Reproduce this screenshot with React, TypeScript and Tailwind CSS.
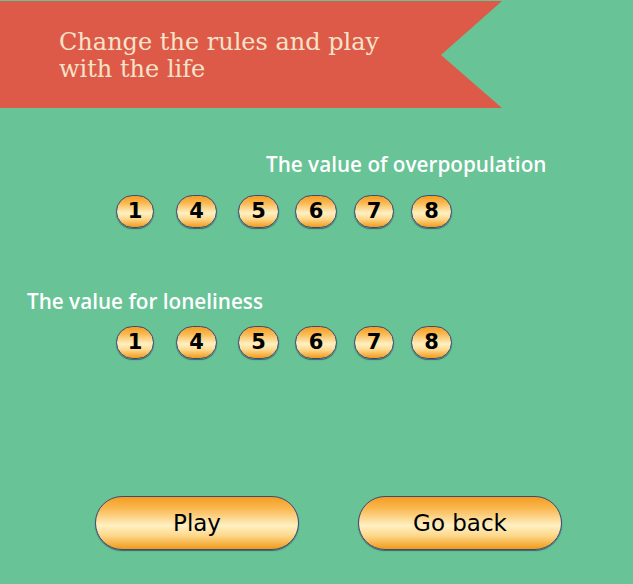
import React from "react";

const pillBg =
  "bg-[linear-gradient(180deg,#f59d22_0%,#f9b850_22%,#fff0c2_55%,#fdd88c_74%,#f29a18_100%)]";

function Pill({ n, w, ml }: { n: string; w: string; ml: string }) {
  return (
    <div
      className={`${w} ${ml} relative h-[33px] rounded-full border border-[#3d4a78] ${pillBg} shadow-[0_1px_1px_rgba(30,40,90,0.6)] flex items-center justify-center text-[21px] font-bold text-black leading-none`}
      style={{ fontFamily: '"DejaVu Sans", sans-serif' }}
    >
      {n}
    </div>
  );
}

function PillRow() {
  return (
    <div className="flex pl-[116px]">
      <Pill n="1" w="w-[38px]" ml="ml-0" />
      <Pill n="4" w="w-[41px]" ml="ml-[22px]" />
      <Pill n="5" w="w-[41px]" ml="ml-[21px]" />
      <Pill n="6" w="w-[42px]" ml="ml-[16px]" />
      <Pill n="7" w="w-[40px]" ml="ml-[17px]" />
      <Pill n="8" w="w-[41px]" ml="ml-[17px]" />
    </div>
  );
}

function BigButton({ label, ml }: { label: string; ml: string }) {
  return (
    <div
      className={`${ml} w-[204px] h-[54px] rounded-full border border-[#3d4a78] ${pillBg} shadow-[0_1px_1px_rgba(30,40,90,0.6)] flex items-center justify-center text-[23px] text-black`}
      style={{ fontFamily: '"DejaVu Sans", sans-serif' }}
    >
      {label}
    </div>
  );
}

export default function App() {
  return (
    <div className="w-[633px] h-[584px] bg-[#68c396] overflow-hidden pt-[1px]">
      <div className="relative w-[502px] h-[107px]">
        <svg className="absolute inset-0" width="502" height="107" viewBox="0 0 502 107">
          <polygon points="0,0 502,0 441,54 502,107 0,107" fill="#dd5a48" />
        </svg>
        <div
          className="relative pl-[59px] pt-[28px] text-[24px] leading-[27px] text-[#f6e2c8]"
          style={{ fontFamily: '"DejaVu Serif", serif' }}
        >
          Change the rules and play
          <br />
          with the life
        </div>
      </div>
      <div
        className="pt-[44px] pl-[266px] text-[20.7px] font-semibold text-white leading-[24px]"
        style={{ fontFamily: '"Open Sans", sans-serif' }}
      >
        The value of overpopulation
      </div>
      <div className="pt-[19px]">
        <PillRow />
      </div>
      <div
        className="pt-[61px] pl-[27px] text-[20.7px] font-semibold text-white leading-[24px]"
        style={{ fontFamily: '"Open Sans", sans-serif' }}
      >
        The value for loneliness
      </div>
      <div className="pt-[13px]">
        <PillRow />
      </div>
      <div className="pt-[137px] flex">
        <BigButton label="Play" ml="ml-[95px]" />
        <BigButton label="Go back" ml="ml-[59px]" />
      </div>
    </div>
  );
}
